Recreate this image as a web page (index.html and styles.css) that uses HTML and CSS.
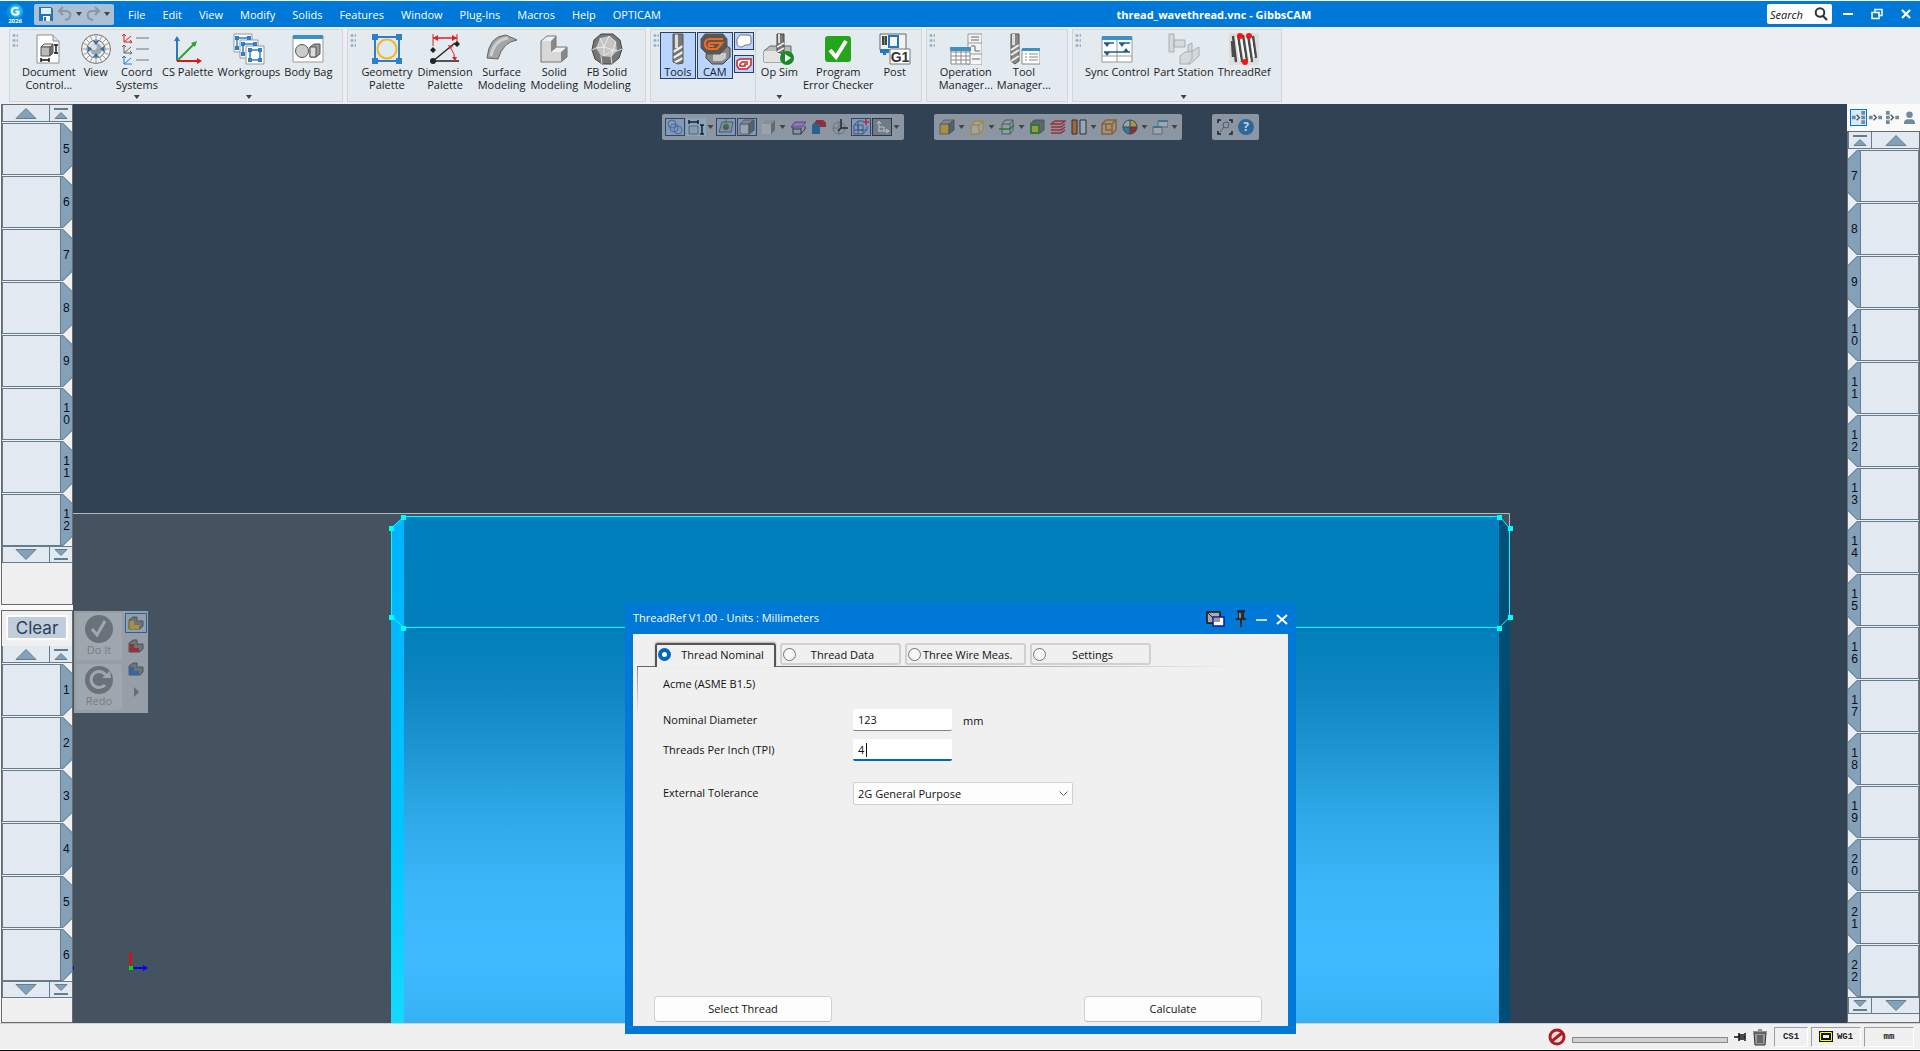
FILE: index.html
```
<!doctype html>
<html lang="en">
  <head>
    <meta charset="utf-8">
    <meta name="viewport" content="width=device-width, initial-scale=1">
    <title>thread_wavethread.vnc - GibbsCAM</title>
    <link rel="stylesheet" href="styles.css">
  </head>
  <body>
    <!-- Shared shapes -->
    <svg class="sprite" aria-hidden="true">
      <symbol id="cube" viewBox="0 0 16 16">
        <path d="M1 5h9v10H1z" fill="currentColor" stroke="#59636d"/>
        <path d="M1 5l4-4h10l-5 4z" fill="#7d868f" stroke="#59636d"/>
        <path d="M10 5l5-4v10l-5 4z" fill="#56606a" stroke="#4b555e"/>
      </symbol>
      <symbol id="up" viewBox="0 0 22 11"><path d="M1 10.500L11 .5l10 10z" fill="#83a1b8" stroke="#657c8c"/></symbol>
      <symbol id="down" viewBox="0 0 22 11"><path d="M1 .5l10 10L21 .5z" fill="#83a1b8" stroke="#657c8c"/></symbol>
      <symbol id="top" viewBox="0 0 14 11"><path d="M0 1h14" stroke="#657c8c" stroke-width="2"/><path d="M1 10.500l6-6 6 6z" fill="#83a1b8" stroke="#657c8c"/></symbol>
      <symbol id="bottom" viewBox="0 0 14 11"><path d="M0 10h14" stroke="#657c8c" stroke-width="2"/><path d="M1 .5l6 6 6-6z" fill="#83a1b8" stroke="#657c8c"/></symbol>
      <symbol id="ell" viewBox="0 0 16 14">
        <path d="M1 4l4-3h4v4l6 0v5l-3 3H1z" fill="#6b747d" stroke="#4a545e" stroke-linejoin="round"/>
        <path d="M1.500 5H6v4h5v4H1.500z" fill="currentColor"/>
      </symbol>
    </svg>

    <!-- Title bar -->
    <header class="titlebar">
      <svg class="logo" viewBox="0 0 18 22"><circle cx="9" cy="9" r="8.500" fill="#0b91dc"/><circle cx="10" cy="8" r="6.500" fill="#22b6ef"/><path d="M12.500 5.500C9 3.500 5.500 5.500 6 9c.5 3 4.500 3.500 6.500 1.500V8.500H9.500" fill="none" stroke="#fff" stroke-width="2"/><text x="9" y="20" class="logo-year">2026</text></svg>
      <div class="quick">
        <button aria-label="Save"><svg width="16" height="16" viewBox="0 0 16 16"><path d="M1 1h12l2 2v12H1z" fill="#2276b8"/><path d="M3 2h10v6H3z" fill="#e4eef6"/><path d="M5 10h7v5H5z" fill="#fff"/><path d="M6 11h2v4H6z" fill="#2276b8"/></svg></button>
        <button aria-label="Undo"><svg width="16" height="16" viewBox="0 0 16 16"><path d="M6 1L2 5l4 4M2 5h7c6 0 6 8-1 9" fill="none" stroke="#8798aa" stroke-width="2"/></svg></button>
        <span class="caret"></span>
        <button aria-label="Redo"><svg width="16" height="16" viewBox="0 0 16 16"><path d="M10 1l4 4-4 4M14 5H7C1 5 1 13 8 14" fill="none" stroke="#8798aa" stroke-width="2"/></svg></button>
        <span class="caret"></span>
      </div>
      <nav class="menu">
        <button>File</button><button>Edit</button><button>View</button><button>Modify</button><button>Solids</button><button>Features</button><button>Window</button><button>Plug-Ins</button><button>Macros</button><button>Help</button><button>OPTICAM</button>
      </nav>
      <h1>thread_wavethread.vnc - GibbsCAM</h1>
      <div class="window-tools">
        <label class="search"><input type="text" placeholder="Search" aria-label="Search"><svg width="14" height="14" viewBox="0 0 14 14"><circle cx="6" cy="5.500" r="4.300" fill="none" stroke="#333" stroke-width="2"/><path d="M9 9l4 4" stroke="#333" stroke-width="2.200"/></svg></label>
        <button aria-label="Minimize"><svg width="12" height="12" viewBox="0 0 12 12"><path d="M1 6h10" stroke="#fff" stroke-width="2"/></svg></button>
        <button aria-label="Restore"><svg width="12" height="12" viewBox="0 0 12 12"><path d="M1 4.500h7v6H1zM4 4V1.500h7v6H8" fill="none" stroke="#fff" stroke-width="1.500"/></svg></button>
        <button aria-label="Close"><svg width="12" height="12" viewBox="0 0 12 12"><path d="M2 2l8 8M10 2l-8 8" stroke="#fff" stroke-width="2.200"/></svg></button>
      </div>
    </header>

    <!-- Ribbon -->
    <section class="ribbon">
      <div class="group">
        <span class="grip"></span>
        <button class="cmd">
          <svg viewBox="0 0 32 32"><path d="M4 2h16l6 6v22H4z" fill="#fff" stroke="#8a8f94"/><path d="M20 2v6h6" fill="#ddd" stroke="#8a8f94"/><path d="M8 14l3-3h9l-3 3z" fill="#eee" stroke="#555"/><path d="M8 14h9v9H8z" fill="#bbb" stroke="#555"/><path d="M17 14l3-3v9l-3 3z" fill="#777" stroke="#555"/><path d="M8 25v4M8 27h8M16 25v4M21 12h4M23 12v8M21 20h4" stroke="#111" stroke-width="1.400"/></svg>
          <span>Document<br>Control...</span>
        </button>
        <button class="cmd">
          <svg viewBox="0 0 32 32"><circle cx="16" cy="16" r="14.500" fill="#f4f4f4" stroke="#777"/><path d="M16 1v30M1 16h30M5.500 5.500l21 21M26.500 5.500l-21 21M10 2.500l12 27M2.500 10l27 12M22 2.500l-12 27M29.500 10l-27 12" stroke="#888" stroke-width=".8"/><circle cx="16" cy="16" r="9" fill="#e8e8e8" stroke="#777"/><circle cx="16" cy="16" r="6" fill="#a8a8a8"/><circle cx="14" cy="14" r="3" fill="#ddd"/><path d="M16 12l-3-4h6zM16 20l-3 4h6zM12 16l-4-3v6zM20 16l4-3v6z" fill="#2276c4"/></svg>
          <span>View</span>
        </button>
        <button class="cmd">
          <svg viewBox="0 0 32 32"><g fill="none"><path d="M3 1v8h8M3 9l7-6M1 3l2-2 2 2M9 7l2 2-2 1" stroke="#d22"/><path d="M3 12v8h8M3 20l7-6M1 14l2-2 2 2M9 18l2 2-2 1" stroke="#666"/><path d="M3 23v8h8M3 31l7-6M1 25l2-2 2 2" stroke="#2878c8"/><path d="M15 5h13M15 16h13M15 27h13" stroke="#777"/></g></svg>
          <span>Coord<br>Systems</span><i class="caret"></i>
        </button>
        <button class="cmd">
          <svg viewBox="0 0 32 32"><path d="M5 28V5" stroke="#2878c8" stroke-width="2"/><path d="M2 8l3-5 3 5z" fill="#2878c8"/><path d="M5 28L22 11" stroke="#2aa52a" stroke-width="2"/><path d="M25 8l-6 2 4 4z" fill="#2aa52a"/><path d="M5 28h20" stroke="#e01515" stroke-width="2"/><path d="M25 25l5 3-5 3z" fill="#e01515"/></svg>
          <span>CS Palette</span>
        </button>
        <button class="cmd">
          <svg viewBox="0 0 32 32"><g fill="#fff" stroke="#999"><path d="M1 1h18v18H1z"/><path d="M7 7h18v18H7z"/><path d="M13 13h18v18H13z"/></g><g fill="none" stroke="#2f7fc8" stroke-width="1.500"><path d="M4 15V5h11M10 21V11h11M17 17h10v10H17z"/></g><path d="M2 3h4v4H2zM14 3h4v4h-4zM2 13h4v4H2zM8 9h4v4H8zM20 9h4v4h-4zM8 19h4v4H8zM15 15h4v4h-4zM25 15h4v4h-4zM15 25h4v4h-4zM25 25h4v4h-4z" fill="#2f7fc8"/></svg>
          <span>Workgroups</span><i class="caret"></i>
        </button>
        <button class="cmd">
          <svg viewBox="0 0 32 32"><path d="M1 3h30v26H1z" fill="#fff" stroke="#999"/><path d="M1 2h30v4H1z" fill="#3d92c4"/><circle cx="10" cy="18" r="6.500" fill="#ccc" stroke="#555"/><path d="M18 14l4-3h6v10l-4 3h-6z" fill="#999" stroke="#555"/><path d="M18 14h6v10h-6z" fill="#ddd" stroke="#555"/></svg>
          <span>Body Bag</span>
        </button>
      </div>

      <div class="group group-modeling">
        <span class="grip"></span>
        <button class="cmd">
          <svg viewBox="0 0 32 32"><path d="M4 4h24v24H4z" fill="#dfe9f2" stroke="#2f7fc8" stroke-width="2"/><circle cx="16" cy="16" r="9.500" fill="none" stroke="#f5b71c" stroke-width="2"/><path d="M1 1h6v6H1zM25 1h6v6h-6zM1 25h6v6H1zM25 25h6v6h-6z" fill="#2f7fc8"/></svg>
          <span>Geometry<br>Palette</span>
        </button>
        <button class="cmd">
          <svg viewBox="0 0 32 32"><path d="M4 1v12M28 1v8" stroke="#d22"/><path d="M4 5h24" stroke="#d22" stroke-width="1.500"/><path d="M4 5l5-3v6zM28 5l-5-3v6z" fill="#d22"/><path d="M4 28L26 10M4 28h26" stroke="#222" stroke-width="1.400"/><path d="M21 14q5 6 5 14" fill="none" stroke="#d22"/><path d="M19 12l5 1-3 3zM23 24h5l-2 4z" fill="#d22"/><path d="M4 14l3 3-3 3-3-3zM28 8l3 3-3 3-3-3z" fill="#222"/><circle cx="4" cy="28" r="3" fill="#222"/></svg>
          <span>Dimension<br>Palette</span>
        </button>
        <button class="cmd">
          <svg viewBox="0 0 32 32"><path d="M1 25Q3 3 20 2l11 5Q17 9 12 26z" fill="#a5a5a5" stroke="#666"/><path d="M5 23Q8 7 22 5" fill="none" stroke="#d0d0d0" stroke-width="3"/></svg>
          <span>Surface<br>Modeling</span>
        </button>
        <button class="cmd">
          <svg viewBox="0 0 32 32"><path d="M3 8h10v11h10v10H3z" fill="#d8d8d8"/><path d="M3 8l6-5h9l-5 5zM13 19l6-5h10l-6 5z" fill="#f0f0f0"/><path d="M13 8l5-5v12l-5 4zM23 19l6-5v10l-6 5z" fill="#888"/><path d="M3 8l6-5h9v11h11v10l-6 5H3z" fill="none" stroke="#777"/></svg>
          <span>Solid<br>Modeling</span>
        </button>
        <button class="cmd">
          <svg viewBox="0 0 32 32"><path d="M10 1h12l7 6 2 9-3 9-7 6H11l-7-5-3-9 2-10z" fill="#777" stroke="#444"/><path d="M9 5l9-2 7 6 1 9-6 6-10-1-5-8z" fill="#c4c4c4"/><path d="M9 5l4 9 5-11 7 6-3 8 4 1M13 14l9 3M5 15l8-1 0 9 9-6-2 7M1 17l4-2M10 23l1 8M20 24l1 7M26 18l5-2" fill="none" stroke="#f4f4f4" stroke-width=".8"/></svg>
          <span>FB Solid<br>Modeling</span>
        </button>
      </div>

      <div class="group group-cam">
        <span class="grip"></span>
        <button class="cmd pressed">
          <svg viewBox="0 0 32 32"><path d="M11 1h10v29l-5 1-5-2z" fill="#777"/><path d="M13 1h3v14h-3z" fill="#ddd"/><path d="M11 19l10-6M11 25l10-6M12 30l9-5" stroke="#eee" stroke-width="2.500"/><path d="M11 1h10v29l-5 1-5-2z" fill="none" stroke="#555"/></svg>
          <span>Tools</span>
        </button>
        <button class="cmd pressed">
          <svg viewBox="0 0 32 32"><path d="M8 11h17l6 4v9l-7 7H13l-6-6z" fill="#888" stroke="#444"/><path d="M14 20h13v5l-4 3h-9z" fill="#c9c9c9"/><path d="M6 1h18l4 5v8l-7 7H8l-6-6V6z" fill="#5d5552" stroke="#555"/><path d="M24 6H11q-5 0-5 5t6 5h6l5-6H12q-3 0-2 3h5" fill="none" stroke="#ec6b25" stroke-width="2.200"/></svg>
          <span>CAM</span>
        </button>
        <div class="mini-stack">
          <button aria-label="Geometry"><svg viewBox="0 0 16 16"><path d="M4 2h8q3 0 3 3v4q0 3-3 3H9l-3 2q-5 0-5-4V6z" fill="#fff" stroke="#777"/></svg></button>
          <button aria-label="Toolpath"><svg viewBox="0 0 16 16"><path d="M4 3h11v6l-4 4H3l-2-3V5z" fill="#fff" stroke="#c22" stroke-width="1.500"/><path d="M12 6H6L4 8v2h5V8h3" fill="none" stroke="#c22" stroke-width="1.500"/></svg></button>
        </div>
        <span class="rule"></span>
        <button class="cmd">
          <svg viewBox="0 0 32 32"><path d="M1 18l6-5h21v10l-5 6H1z" fill="#bbb" stroke="#666"/><path d="M1 18h17v11H1z" fill="#e3e3e3"/><path d="M14 1h7v20l-7-2z" fill="#777" stroke="#444"/><path d="M15 1h2v9h-2z" fill="#ddd"/><path d="M14 14l7-4M14 19l7-4" stroke="#eee" stroke-width="1.500"/><circle cx="24" cy="25" r="7" fill="#168a25"/><path d="M22 21l6 4-6 4z" fill="#fff"/></svg>
          <span>Op Sim</span><i class="caret"></i>
        </button>
        <button class="cmd">
          <svg viewBox="0 0 32 32"><rect x="3" y="3" width="26" height="26" rx="3" fill="#25a51c"/><path d="M8 17l6 7L24 8" fill="none" stroke="#fff" stroke-width="4"/></svg>
          <span>Program<br>Error Checker</span>
        </button>
        <button class="cmd">
          <svg viewBox="0 0 32 32"><path d="M1 1h26v16H1z" fill="#f2f2f2" stroke="#666"/><path d="M3 3h5v9H3z" fill="#444"/><path d="M5 3h1v9H5z" fill="#5a5"/><path d="M9 2h11v13H9z" fill="#2276c4"/><path d="M11 4h7v9h-7z" fill="#f5f5f5"/><path d="M1 16h9v4H7v2H4v-2H1z" fill="#2276c4"/><path d="M11 16h20v15H11z" fill="#fff" stroke="#777"/><text x="21" y="29" class="g-code">G1</text></svg>
          <span>Post</span>
        </button>
      </div>

      <div class="group group-managers">
        <span class="grip"></span>
        <button class="cmd">
          <svg viewBox="0 0 32 32"><path d="M18 1h14v31H18zM18 10h14M18 21h14" fill="#f4f4f4" stroke="#999"/><path d="M21 4h8M21 7h8M21 13h4v5h5M22 26h8" fill="none" stroke="#666"/><path d="M1 15h19v16H1z" fill="#fff" stroke="#888"/><path d="M1 19h19M1 23h19M1 27h19M6 17v14M11 17v14M16 17v14" stroke="#888"/><path d="M0 14h21v4H0z" fill="#3d92c4"/></svg>
          <span>Operation<br>Manager...</span>
        </button>
        <button class="cmd">
          <svg viewBox="0 0 32 32"><path d="M3 1h8v27l-4 3-4-3z" fill="#888" stroke="#555"/><path d="M4 1h3v11H4z" fill="#ddd"/><path d="M3 17l8-5M3 22l8-5M3 28l8-5" stroke="#eee" stroke-width="2"/><path d="M14 16h18v15H14z" fill="#fff" stroke="#888"/><path d="M14 15h18v3H14z" fill="#3d92c4"/><path d="M17 21h2M17 24h2M17 27h2M21 21h9M21 24h9M21 27h9" stroke="#888"/></svg>
          <span>Tool<br>Manager...</span>
        </button>
      </div>

      <div class="group">
        <span class="grip"></span>
        <button class="cmd">
          <svg viewBox="0 0 32 32"><path d="M1 4h30v25H1zM1 23h30M16 7v22" fill="#fff" stroke="#999"/><path d="M1 3h30v4H1z" fill="#3d92c4"/><path d="M3 10h10M18 10h11M3 19h26" stroke="#1f5c94" stroke-width="1.500"/><path d="M3 10h6l-3 4zM18 10h6l-3 4zM3 19h6l-3 4zM22 19h6l-3-4z" fill="#1f5c94"/></svg>
          <span>Sync Control</span>
        </button>
        <button class="cmd">
          <svg viewBox="0 0 32 32"><g fill="#d5d9dc" stroke="#a9aeb3"><path d="M1 1h5v18H1zM6 7h11v7H6z"/><path d="M12 23l5-4h3v-7l4-2v8l7-4v9l-9 8H12z"/><path d="M20 19l4-1v8l-4 5"/></g></svg>
          <span>Part Station</span><i class="caret"></i>
        </button>
        <button class="cmd">
          <svg viewBox="0 0 32 32"><path d="M1 0h30v32H1z" fill="#dedede"/><path d="M5 3l3 26M10 2l4 27M15 2l4 27M20 2l4 27M25 3l3 22M4 8l1 16" stroke="#4a4a4a" stroke-width="2.400"/><path d="M8 4l4 24M13 4l4 24M18 4l4 24M23 4l3 20" stroke="#fff" stroke-width="1.500"/><circle cx="12" cy="3" r="3" fill="#f11"/><circle cx="21" cy="3" r="3" fill="#f11"/><circle cx="17" cy="29" r="3" fill="#f11"/></svg>
          <span>ThreadRef</span>
        </button>
      </div>
    </section>

    <main class="workspace">
      <!-- Tool tiles and operation tiles -->
      <aside class="side side-left">
        <div class="palette grow">
          <div class="nav"><button aria-label="Up"><svg class="wide"><use href="#up"/></svg></button><button class="small" aria-label="First"><svg class="narrow"><use href="#top"/></svg></button></div>
          <button class="tile"><span>5</span></button>
          <button class="tile"><span>6</span></button>
          <button class="tile"><span>7</span></button>
          <button class="tile"><span>8</span></button>
          <button class="tile"><span>9</span></button>
          <button class="tile"><span>10</span></button>
          <button class="tile"><span>11</span></button>
          <button class="tile"><span>12</span></button>
          <div class="nav nav-end"><button aria-label="Down"><svg class="wide"><use href="#down"/></svg></button><button class="small" aria-label="Last"><svg class="narrow"><use href="#bottom"/></svg></button></div>
        </div>
        <div class="palette lower">
          <button class="clear">Clear</button>
          <div class="nav"><button aria-label="Up"><svg class="wide"><use href="#up"/></svg></button><button class="small" aria-label="First"><svg class="narrow"><use href="#top"/></svg></button></div>
          <button class="tile"><span>1</span></button>
          <button class="tile"><span>2</span></button>
          <button class="tile"><span>3</span></button>
          <button class="tile"><span>4</span></button>
          <button class="tile"><span>5</span></button>
          <button class="tile"><span>6</span></button>
          <div class="nav nav-end"><button aria-label="Down"><svg class="wide"><use href="#down"/></svg></button><button class="small" aria-label="Last"><svg class="narrow"><use href="#bottom"/></svg></button></div>
        </div>
      </aside>

      <section class="viewport">
        <svg class="scene" viewBox="0 0 1774 919" preserveAspectRatio="xMidYMin slice">
          <defs>
            <linearGradient id="face" x1="0" y1="0" x2="0" y2="1"><stop offset="0" stop-color="#0080bf"/><stop offset=".22" stop-color="#007fbc"/><stop offset=".33" stop-color="#0d85c2"/><stop offset=".45" stop-color="#1c94d1"/><stop offset=".59" stop-color="#2fa8e7"/><stop offset=".73" stop-color="#3bb6f8"/><stop offset=".88" stop-color="#3fbaff"/><stop offset="1" stop-color="#36b2f4"/></linearGradient>
            <linearGradient id="lit" x1="0" y1="0" x2="0" y2="1"><stop offset="0" stop-color="#00b4ff"/><stop offset=".6" stop-color="#00c4ff"/><stop offset="1" stop-color="#14daff"/></linearGradient>
            <linearGradient id="shade" x1="0" y1="0" x2="0" y2="1"><stop offset="0" stop-color="#00527a"/><stop offset=".6" stop-color="#00466a"/><stop offset="1" stop-color="#004d77"/></linearGradient>
          </defs>
          <path d="M0 409h1437v510H0z" fill="#45525f"/>
          <path d="M0 409.500h1436.500v14" fill="none" stroke="#b4b9be"/>
          <path d="M318 424l13-12v507h-13z" fill="url(#lit)"/>
          <path d="M331 412h1095v507H331z" fill="url(#face)"/>
          <path d="M1426 412l11 12v495h-11z" fill="url(#shade)"/>
          <path d="M331.500 412.500h1095l10 11.500v89l-10 10.500h-1095l-13-10.500v-89z" fill="none" stroke="#00ffff"/>
          <path d="M328 411h5v5h-5zM316 422h5v5h-5zM316 511h5v5h-5zM328 522h5v5h-5zM1424 411h5v5h-5zM1435 422h5v5h-5zM1435 511h5v5h-5zM1424 522h5v5h-5z" fill="#00ffff"/>
          <path d="M57.500 864v-13" stroke="#f00" stroke-width="2"/><path d="M55.500 852l2-4 2 4z" fill="#f00"/>
          <path d="M59 864h11" stroke="#00f" stroke-width="2"/><path d="M70 861l5 3-5 3z" fill="#00f"/>
          <path d="M56 862h4v4h-4z" fill="#0d0"/><path d="M0 862h1v4H0z" fill="#00f"/>
        </svg>

        <!-- View toolbars -->
        <div class="toolbars">
          <div class="toolbar">
            <button class="on" aria-label="Geometry"><svg viewBox="0 0 16 16"><g fill="none" stroke="#4b6a91"><circle cx="5" cy="5" r="4"/><circle cx="7" cy="9" r="4"/><circle cx="11" cy="11" r="4"/></g></svg></button>
            <button class="soft" aria-label="Dimensions"><svg viewBox="0 0 16 16"><path d="M1 1v4M1 3h9M10 1v4M12 6h4M14 6v9M12 15h4" stroke="#15202a" stroke-width="1.500"/><path d="M1 7h9v8H1z" fill="#8c9bac" stroke="#506880"/></svg></button>
            <span class="caret"></span>
            <button class="on" aria-label="Origin"><svg viewBox="0 0 16 16"><path d="M4 3h11l-2 10H1z" fill="#86909a" stroke="#4f5963"/><circle cx="8" cy="8" r="3" fill="#4f5963"/><path d="M8 0v9M6 7h5" stroke="#2b8a38"/></svg></button>
            <button class="on" aria-label="Solid"><svg class="c-grey"><use href="#cube"/></svg></button>
            <button aria-label="Wireframe"><svg viewBox="0 0 16 16"><path d="M2 5h9v10H2z" fill="#99a3ac"/><path d="M2 5l4-4h9l-4 4z" fill="#858e97"/><path d="M11 5l4-4v10l-4 4z" fill="#606a74"/></svg></button>
            <span class="caret"></span>
            <button aria-label="Plane"><svg viewBox="0 0 16 16"><path d="M3 8v7h8l4-5V7M11 9v6M3 10h8" fill="none" stroke="#303a45"/><path d="M5 3h11l-4 5H1z" fill="#8b76b3" stroke="#5a3d92"/></svg></button>
            <button aria-label="Intersect"><svg viewBox="0 0 16 16"><path d="M1 6l4-4h4v13H1z" fill="#2f5f8b"/><path d="M5 1h7q4 2 3 7H9V5H4z" fill="#8f2f3b"/></svg></button>
            <button aria-label="Coordinate sphere"><svg viewBox="0 0 16 16"><circle cx="7" cy="9" r="6" fill="none" stroke="#67727c"/><path d="M7 3v12M1 9h5" stroke="#67727c"/><path d="M9 0v9h7M6 12l3-3" fill="none" stroke="#202a33" stroke-width="1.500"/></svg></button>
            <button class="on" aria-label="Grid box"><svg viewBox="0 0 16 16"><path d="M1 6h9v9H1zM1 6l4-4h5M10 15l4-4V7M5 2v9h9M1 11h9M5 6v9" fill="none" stroke="#415b7a"/><path d="M13 0v6M10 3h6" stroke="#b02b3b" stroke-width="1.500"/></svg></button>
            <button class="boxed" aria-label="Axes"><svg viewBox="0 0 16 16"><path d="M5 13V3M5 12h9M3 5l2-3 2 3M12 10l3 2-3 2M5 8h5v4" fill="none" stroke="#bcc6d0"/></svg></button>
            <span class="caret"></span>
          </div>
          <div class="toolbar">
            <button aria-label="Shaded"><svg class="c-gold"><use href="#cube"/></svg></button><span class="caret"></span>
            <button aria-label="Edges"><svg viewBox="0 0 16 16"><path d="M2 6h8v9H2zM2 6l4-4h8v9l-4 4M10 6l4-4" fill="#9aa4ad" stroke="#a58842" stroke-width="1.500"/></svg></button><span class="caret"></span>
            <button aria-label="Section"><svg viewBox="0 0 16 16"><path d="M3 5h8v10H3zM3 5l3-4h8v10l-3 4M11 5l3-4" fill="#919ca6" stroke="#4d5862"/><path d="M0 10h11l4-4" fill="none" stroke="#2b7a31" stroke-width="1.500"/></svg></button><span class="caret"></span>
            <button aria-label="Face"><svg viewBox="0 0 16 16"><path d="M1 5l4-4h10v10l-5 4z" fill="#5c6670" stroke="#4b555e"/><path d="M2 6h8v8H2z" fill="#a39448" stroke="#2f7a35" stroke-width="2"/></svg></button>
            <button aria-label="Layers"><svg viewBox="0 0 16 16"><path d="M1 5l4-3h10l-4 3zM1 8h10l4-3M1 11h10l4-3M1 14h10l4-3" fill="none" stroke="#9b2f3c" stroke-width="1.500"/></svg></button>
            <button aria-label="Panels"><svg viewBox="0 0 16 16"><path d="M1 1h5v14H1z" fill="#a76732" stroke="#293541"/><path d="M9 1h6v14H9z" fill="#99a5b3" stroke="#293541"/></svg></button><span class="caret"></span>
            <button aria-label="Stock"><svg viewBox="0 0 16 16"><path d="M1 5h10v10H1zM1 5l4-4h10v10l-4 4M11 5l4-4M5 5v6h6" fill="#a39477" stroke="#86603e" stroke-width="1.500"/></svg></button>
            <button aria-label="Analysis"><svg viewBox="0 0 16 16"><circle cx="8" cy="8" r="7" fill="#9aa4ad"/><path d="M8 1a7 7 0 0 1 7 7H8z" fill="#aa9541"/><path d="M15 8a7 7 0 0 1-7 7V8z" fill="#8f2f3b"/><path d="M1 8a7 7 0 0 0 7 7V8z" fill="#3c779e"/><path d="M8 1v14M1 8h14" stroke="#394650"/><circle cx="8" cy="8" r="7" fill="none" stroke="#394650"/></svg></button><span class="caret"></span>
            <button aria-label="Windows"><svg viewBox="0 0 16 16"><path d="M6 2h10v6H6zM1 8h9v7H1z" fill="#9ba6b1" stroke="#5b6874"/><path d="M6 1h10v2H6zM1 7h9v2H1z" fill="#3e7394"/></svg></button><span class="caret"></span>
          </div>
          <div class="toolbar">
            <button aria-label="Zoom to fit"><svg viewBox="0 0 16 16"><path d="M1 4V1h3M12 1h3v3M15 12v3h-3M4 15H1v-3" fill="none" stroke="#1a232c" stroke-width="1.500"/><circle cx="9" cy="6" r="3" fill="none" stroke="#4c5863"/><path d="M7 8l-4 5" stroke="#4c5863"/></svg></button>
            <button aria-label="Help"><svg viewBox="0 0 16 16"><circle cx="8" cy="8" r="8" fill="#2c689c"/><text x="8" y="12" class="help-mark">?</text></svg></button>
          </div>
        </div>

        <!-- Machining actions -->
        <div class="actions">
          <div class="action-main">
            <button disabled><svg viewBox="0 0 28 28"><circle cx="14" cy="14" r="14" fill="#69727a"/><path d="M7 14l5 6L20 6" fill="none" stroke="#a0a8af" stroke-width="3"/></svg>Do It</button>
            <button disabled><svg viewBox="0 0 28 28"><circle cx="14" cy="14" r="14" fill="#69727a"/><path d="M20 19a8 8 0 1 1 2-7" fill="none" stroke="#a0a8af" stroke-width="3"/><path d="M17 12h9l-1-7z" fill="#a0a8af"/></svg>Redo</button>
          </div>
          <div class="action-side">
            <button class="picked" aria-label="Part"><svg class="c-gold"><use href="#ell"/></svg></button>
            <button aria-label="Fixture"><svg class="c-red"><use href="#ell"/></svg></button>
            <button aria-label="Stock"><svg class="c-blue"><use href="#ell"/></svg></button>
            <button aria-label="More"><svg viewBox="0 0 16 14"><path d="M6 2l5 5-5 5z" fill="#646d75"/></svg></button>
          </div>
        </div>
      </section>

      <aside class="side side-right">
        <div class="flow-tools">
          <button class="picked" aria-label="Insert right"><svg viewBox="0 0 14 14"><path d="M0 5h4v4H0zM10 0h4v4h-4zM10 5h4v4h-4zM10 10h4v4h-4z" fill="#6e8ba3"/><path d="M5 4l3 3-3 3" fill="none" stroke="#555" stroke-width="1.500"/></svg></button>
          <button aria-label="Insert"><svg viewBox="0 0 14 14"><path d="M0 5h4v4H0zM10 5h4v4h-4z" fill="#6e8ba3"/><path d="M5 4l3 3-3 3" fill="none" stroke="#555" stroke-width="1.500"/></svg></button>
          <button aria-label="Insert left"><svg viewBox="0 0 14 14"><path d="M0 0h4v4H0zM0 5h4v4H0zM0 10h4v4H0zM10 5h4v4h-4z" fill="#6e8ba3"/><path d="M5 4l3 3-3 3" fill="none" stroke="#555" stroke-width="1.500"/></svg></button>
          <button aria-label="User"><svg viewBox="0 0 14 14"><circle cx="7" cy="4" r="3.500" fill="#6e8ba3"/><path d="M1 14q0-5 4-5h4q4 0 4 5z" fill="#6e8ba3"/></svg></button>
        </div>
        <div class="palette grow">
          <div class="nav"><button class="small" aria-label="First"><svg class="narrow"><use href="#top"/></svg></button><button aria-label="Up"><svg class="wide"><use href="#up"/></svg></button></div>
          <button class="tile"><span>7</span></button>
          <button class="tile"><span>8</span></button>
          <button class="tile"><span>9</span></button>
          <button class="tile"><span>10</span></button>
          <button class="tile"><span>11</span></button>
          <button class="tile"><span>12</span></button>
          <button class="tile"><span>13</span></button>
          <button class="tile"><span>14</span></button>
          <button class="tile"><span>15</span></button>
          <button class="tile"><span>16</span></button>
          <button class="tile"><span>17</span></button>
          <button class="tile"><span>18</span></button>
          <button class="tile"><span>19</span></button>
          <button class="tile"><span>20</span></button>
          <button class="tile"><span>21</span></button>
          <button class="tile"><span>22</span></button>
          <div class="nav nav-end"><button class="small" aria-label="Last"><svg class="narrow"><use href="#bottom"/></svg></button><button aria-label="Down"><svg class="wide"><use href="#down"/></svg></button></div>
        </div>
      </aside>
    </main>

    <!-- Status bar -->
    <footer class="statusbar">
      <svg width="18" height="18" viewBox="0 0 18 18"><circle cx="9" cy="9" r="7" fill="#f7dede" stroke="#a91f24" stroke-width="3"/><path d="M4 13L14 5" stroke="#a91f24" stroke-width="3"/></svg>
      <span class="progress"></span>
      <svg width="12" height="10" viewBox="0 0 12 10"><path d="M0 5h5M5 1v8M5 3h5M5 7h5M11 1v8M5 5h6" stroke="#111" stroke-width="1.500"/></svg>
      <svg width="16" height="18" viewBox="0 0 16 18"><path d="M2 5h12l-1 12H3z" fill="#999" stroke="#333"/><path d="M1 4h14M6 2h4M6 7v8M8 7v8M10 7v8" stroke="#333"/></svg>
      <button class="cell cell-cs">CS1</button>
      <button class="cell"><svg width="14" height="11" viewBox="0 0 14 11"><path d="M0 0h14v11H0z" fill="#111"/><path d="M1.500 1.500h11v8h-11z" fill="#111" stroke="#ff0"/><path d="M4 4h6v3H4z" fill="#eee"/></svg>WG1</button>
      <button class="cell">mm</button>
    </footer>

    <!-- ThreadRef window -->
    <form class="dialog" role="dialog" aria-labelledby="dialog-title">
      <div class="dialog-bar">
        <h2 id="dialog-title">ThreadRef V1.00 - Units : Millimeters</h2>
        <button type="button" aria-label="Dock"><svg width="20" height="16" viewBox="0 0 20 16"><path d="M1 1h13v11H1z" fill="#aaa" stroke="#111" stroke-width="1.500"/><path d="M1 1l6 6" fill="none" stroke="#222"/><path d="M7 6h11v9H7z" fill="#fff" stroke="#0a12a8" stroke-width="1.500"/><path d="M8 7h6v4H8z" fill="#999"/></svg></button>
        <button type="button" aria-label="Pin"><svg width="14" height="17" viewBox="0 0 14 17"><path d="M3 0h8v2l-1 1v4l3 3H1l3-3V3L3 2zM6 10h2v7H6z" fill="#2b2b2b"/><path d="M5 3h2v5H5z" fill="#888"/></svg></button>
        <button type="button" aria-label="Minimize"><svg width="12" height="12" viewBox="0 0 12 12"><path d="M0 7h11" stroke="#fff" stroke-width="1.500"/></svg></button>
        <button type="button" aria-label="Close"><svg width="12" height="12" viewBox="0 0 12 12"><path d="M1 2l10 9M11 2L1 11" stroke="#fff" stroke-width="2"/></svg></button>
      </div>
      <div class="dialog-body">
        <div class="tabs">
          <label class="tab active"><input type="radio" name="page" checked><span>Thread Nominal</span></label>
          <label class="tab"><input type="radio" name="page"><span>Thread Data</span></label>
          <label class="tab tight"><input type="radio" name="page"><span>Three Wire Meas.</span></label>
          <label class="tab"><input type="radio" name="page"><span>Settings</span></label>
        </div>
        <div class="page">
          <p>Acme (ASME B1.5)</p>
          <div class="field"><label for="diameter">Nominal Diameter</label><input id="diameter" type="text" value="123"><span>mm</span></div>
          <div class="field"><label for="tpi">Threads Per Inch (TPI)</label><input id="tpi" class="focused" type="text" value="4"></div>
          <div class="field field-tolerance"><label for="tolerance">External Tolerance</label><select id="tolerance"><option>2G General Purpose</option></select></div>
        </div>
        <div class="dialog-buttons">
          <button type="button">Select Thread</button>
          <button type="button">Calculate</button>
        </div>
      </div>
    </form>
  </body>
</html>
```

FILE: styles.css
```
/* Reset */
* {
  margin: 0;
  padding: 0;
  box-sizing: border-box;
}

body {
  display: flex;
  flex-direction: column;
  height: 100vh;
  overflow: hidden;
  border-top: 1px solid #fff;
  border-bottom: 1px solid #111;
  background-color: #fff;
  color: #1c1c1c;
  font-family: "Open Sans", "Noto Sans", sans-serif;
  font-size: 11px;
}

button,
input,
select {
  border: none;
  background: none;
  color: inherit;
  font: inherit;
}

svg {
  display: block;
  flex: none;
}

.sprite {
  position: absolute;
  width: 0;
  height: 0;
}

.caret {
  flex: none;
  width: 6px;
  height: 4px;
  background-color: #444;
  clip-path: polygon(0 0, 100% 0, 50% 100%);
}

/* Title bar */
.titlebar {
  display: flex;
  align-items: center;
  height: 26px;
  padding: 0 8px 0 6px;
  background-color: #0078d7;
  color: #fff;
}

.logo {
  width: 18px;
  height: 22px;
}

.logo-year {
  fill: #fff;
  font-size: 6px;
  font-weight: bold;
  text-anchor: middle;
}

.quick {
  display: flex;
  align-items: center;
  gap: 3px;
  height: 21px;
  margin-left: 10px;
  padding: 0 4px;
  border-radius: 2px;
  background-color: #adbfd2;
}

.menu {
  display: flex;
  gap: 17px;
  margin-left: 14px;
}

.titlebar h1 {
  flex: 1;
  font-size: 11px;
  font-weight: bold;
  text-align: center;
}

.window-tools {
  display: flex;
  align-items: center;
  gap: 17px;
}

.search {
  display: flex;
  align-items: center;
  width: 65px;
  height: 20px;
  margin-right: -7px;
  padding: 0 4px 0 3px;
  border-radius: 2px;
  background-color: #fff;
}

.search input {
  flex: 1;
  min-width: 0;
}

.search input::placeholder {
  color: #111;
  font-style: italic;
}

/* Ribbon */
.ribbon {
  display: flex;
  gap: 4px;
  height: 77px;
  padding: 2px 9px;
  background-color: #ebeff3;
}

.group {
  display: flex;
  gap: 4px;
  padding: 3px 10px 0 2px;
  border: 1px solid #d2d6da;
  background-color: #e3eaf0;
}

.group-modeling {
  gap: 5px;
  padding-right: 14px;
}

.group-managers {
  padding-right: 16px;
}

.grip {
  width: 6px;
  height: 15px;
  background-image: radial-gradient(circle, #9db2c6 1px, transparent 2px);
  background-size: 4px 5px;
}

.cmd {
  display: flex;
  flex-direction: column;
  align-items: center;
  min-width: 32px;
  line-height: 13px;
}

.cmd svg {
  width: 32px;
  height: 32px;
}

.cmd .caret {
  margin-top: auto;
  margin-bottom: 2px;
}

.group-cam {
  gap: 5px;
}

.pressed {
  width: 36px;
  height: 47px;
  margin-top: -1px;
  border: 1px solid #2d3f66;
  background-color: #b9d4fd;
}

.pressed,
.mini-stack,
.rule {
  margin-left: -4px;
}

.mini-stack {
  display: flex;
  flex-direction: column;
  gap: 5px;
  margin-top: -1px;
}

.mini-stack button {
  width: 20px;
  height: 18px;
  padding: 0 1px;
  border: 1px solid #2d3f66;
  background-color: #b9d4fd;
}

.mini-stack svg {
  width: 16px;
  height: 16px;
}

.rule {
  width: 1px;
  margin-top: -3px;
  background-color: #cfd4d9;
}

.g-code {
  fill: #333;
  font-family: "Liberation Sans", sans-serif;
  font-size: 14px;
  font-weight: bold;
  text-anchor: middle;
}

/* Side palettes */
.workspace {
  display: flex;
  flex: 1;
  min-height: 0;
}

.side {
  display: flex;
  flex-direction: column;
  width: 73px;
  padding-left: 1px;
  background-color: #fafafa;
}

.palette {
  display: flex;
  flex-direction: column;
  border: 1px solid #6a6a6a;
  background-color: #f0f0f0;
}

.grow {
  flex: 1;
}

.lower {
  margin-top: 5px;
  padding-bottom: 24px;
}

.nav {
  display: flex;
  gap: 1px;
  height: 17px;
  border: 1px solid #657c8c;
  border-width: 0 0 1px 1px;
  background-color: #657c8c;
}

.nav-end {
  border-top-width: 1px;
}

.nav button {
  display: flex;
  flex: 1;
  justify-content: center;
  align-items: center;
  background-color: #e2e9f0;
}

.nav .small {
  flex: none;
  width: 22px;
}

.wide {
  width: 22px;
  height: 11px;
}

.narrow {
  width: 14px;
  height: 11px;
}

.tile {
  display: flex;
  justify-content: flex-end;
  flex: none;
  height: 52px;
  margin-top: 1px;
  border: 1px solid #657c8c;
  border-right: none;
  background-color: #e2e9f0;
  clip-path: polygon(0 0, calc(100% - 9px) 0, 100% 9px, 100% calc(100% - 9px), calc(100% - 9px) 100%, 0 100%);
}

.tile span {
  display: flex;
  align-items: center;
  width: 12px;
  height: 50px;
  padding: 0 2px;
  border-left: 1px solid #657c8c;
  background-color: #83a1b8;
  background-image:
    linear-gradient(225deg, #657c8c 6px, transparent 7px),
    linear-gradient(315deg, #657c8c 6px, transparent 7px);
  background-size: 100% 50%;
  background-position: top, bottom;
  background-repeat: no-repeat;
  color: #0b0b1c;
  font-family: "Liberation Sans", sans-serif;
  font-size: 12px;
  line-height: 12px;
  word-break: break-all;
}

.side-right .tile {
  justify-content: flex-start;
  border-left: none;
  border-right: 1px solid #657c8c;
  clip-path: polygon(9px 0, 100% 0, 100% 100%, 9px 100%, 0 calc(100% - 9px), 0 9px);
}

.side-right .tile span {
  width: 13px;
  padding: 0 2px 0 3px;
  border-left: none;
  border-right: 1px solid #657c8c;
  background-image:
    linear-gradient(135deg, #657c8c 6px, transparent 7px),
    linear-gradient(45deg, #657c8c 6px, transparent 7px);
}

.side-right {
  padding-left: 0;
}

.side-right .palette {
  background-color: #e8eef3;
}

.clear {
  height: 25px;
  margin: 4px 4px 6px;
  border: 2px solid #fcfcfc;
  border-radius: 3px;
  background-color: #bfcddc;
  color: #2c4058;
  font-family: Inter, "Liberation Sans", sans-serif;
  font-size: 17px;
  line-height: 20px;
}

.flow-tools {
  display: flex;
  align-items: center;
  height: 27px;
  padding-left: 3px;
}

.flow-tools button {
  display: flex;
  justify-content: center;
  align-items: center;
  width: 17px;
  height: 17px;
}

.flow-tools svg {
  width: 13px;
  height: 13px;
}

.flow-tools .picked {
  border: 1px solid #0078d7;
  background-color: #d9ebfa;
}

/* Viewport */
.viewport {
  flex: 1;
  position: relative;
  overflow: hidden;
  background-color: #304254;
}

.scene {
  position: absolute;
  inset: 0;
  width: 100%;
  height: 100%;
}

.toolbars {
  position: absolute;
  top: 10px;
  left: 0;
  right: 0;
  display: flex;
  justify-content: center;
  gap: 30px;
}

.toolbar {
  display: flex;
  align-items: center;
  gap: 1px;
  height: 26px;
  padding: 0 3px;
  border-radius: 2px;
  background-color: #8b96a2;
}

.toolbar button {
  display: flex;
  justify-content: center;
  align-items: center;
  width: 20px;
  height: 18px;
}

.toolbar svg {
  width: 16px;
  height: 16px;
}

.toolbar .on {
  border: 1px solid #34455f;
  background-color: #7f98bb;
}

.toolbar .soft {
  background-color: #8ba5bf;
}

.toolbar .boxed {
  border: 1px solid #2b3743;
  background-color: #6f7b87;
}

.toolbar .caret {
  margin: 0 1px;
}

.help-mark {
  fill: #c5d2dc;
  font-size: 12px;
  font-weight: bold;
  text-anchor: middle;
}

.c-grey { color: #99a3ad; }
.c-gold { color: #a8903c; }
.c-red { color: #96313a; }
.c-blue { color: #34689a; }

.actions {
  position: absolute;
  top: 507px;
  left: 1px;
  display: flex;
  gap: 3px;
  width: 74px;
  height: 102px;
  padding: 2px 1px 3px 2px;
  background-color: #969fa7;
}

.action-main {
  display: flex;
  flex: 1;
  flex-direction: column;
  gap: 4px;
}

.action-main button {
  display: flex;
  flex: 1;
  flex-direction: column;
  align-items: center;
  justify-content: center;
  border-radius: 3px;
  background-color: #9fa7ae;
  color: #747d85;
  line-height: 14px;
}

.action-main svg {
  width: 28px;
  height: 28px;
}

.action-side {
  display: flex;
  flex-direction: column;
  gap: 3px;
}

.action-side button {
  display: flex;
  justify-content: center;
  align-items: center;
  width: 22px;
  height: 20px;
}

.action-side svg {
  width: 16px;
  height: 14px;
}

.action-side .picked {
  border: 1px solid #1d66a6;
}

/* Status bar */
.statusbar {
  display: flex;
  justify-content: flex-end;
  align-items: center;
  gap: 6px;
  height: 27px;
  padding-right: 9px;
  border-top: 1px solid #cfd0d6;
  border-bottom: 1px solid #fff;
  background-color: #f0f0f0;
}

.progress {
  width: 156px;
  height: 6px;
  margin-top: 7px;
  border: 1px solid #888;
  background-color: #d2d2d2;
}

.cell {
  display: flex;
  justify-content: center;
  align-items: center;
  gap: 4px;
  width: 50px;
  height: 20px;
  margin-right: -3px;
  border: 1px solid #9d9d9d;
  border-color: #9d9d9d #fff #fff #9d9d9d;
  font-family: "Liberation Mono", monospace;
  font-size: 9px;
  font-weight: bold;
}

.cell-cs {
  width: 34px;
}

/* ThreadRef window */
.dialog {
  position: absolute;
  left: 50%;
  bottom: 17px;
  display: flex;
  flex-direction: column;
  width: 671px;
  height: 431px;
  margin-left: -335px;
  padding: 0 8px 8px;
  background-color: #0078d7;
  color: #111;
}

.dialog-bar {
  display: flex;
  align-items: center;
  gap: 8px;
  height: 31px;
  color: #fff;
}

.dialog-bar h2 {
  flex: 1;
  padding-bottom: 2px;
  font-size: 11px;
  font-weight: normal;
}

.dialog-body {
  display: flex;
  flex: 1;
  flex-direction: column;
  padding: 9px 26px 4px 4px;
  background-color: #f0f0f0;
}

.tabs {
  display: flex;
  gap: 4px;
  height: 23px;
  padding-left: 18px;
}

.tab {
  display: flex;
  align-items: center;
  width: 121px;
  height: 22px;
  padding-left: 1px;
  border: 2px solid #d0d0d0;
  border-radius: 3px;
}

.tab span {
  flex: 1;
  padding-right: 10px;
  text-align: center;
}

.tab.tight span {
  padding: 0 0 0 2px;
  text-align: left;
}

.tab input {
  appearance: none;
  width: 13px;
  height: 13px;
  border: 1px solid #707070;
  border-radius: 50%;
  background-color: #f8f8f8;
}

.tab input:checked {
  border: 4px solid #0067c0;
  background-color: #fff;
}

.tab.active {
  height: 24px;
  padding-bottom: 3px;
  border: 2px solid #555;
  border-bottom: none;
  border-radius: 3px 3px 0 0;
  background-color: #f0f0f0;
  box-shadow: 0 -1px 2px #aaa;
}

.tab.active span {
  padding-right: 0;
}

.page {
  flex: 1;
  padding: 10px 0 0 26px;
  background-image:
    linear-gradient(#666, #666),
    linear-gradient(90deg, #666, #f0f0f0 95%),
    linear-gradient(#888, #f0f0f0);
  background-size: 18px 1px, calc(100% - 139px) 1px, 1px 50px;
  background-position: 0 0, 139px 0, 0 0;
  background-repeat: no-repeat;
}

.page p {
  line-height: 16px;
}

.field {
  display: flex;
  align-items: center;
  margin-top: 8px;
}

.page p + .field {
  margin-top: 17px;
}

.field label {
  width: 190px;
  padding-bottom: 2px;
}

.field input {
  width: 99px;
  height: 22px;
  padding: 0 5px;
  border-bottom: 1px solid #868686;
  border-radius: 2px;
  background-color: #fff;
}

/* Text cursor after the value */
.field .focused {
  border-bottom: 2px solid #0067c0;
  background-image: linear-gradient(#111, #111);
  background-size: 1px 14px;
  background-position: 13px 4px;
  background-repeat: no-repeat;
}

.field span {
  margin-left: 11px;
}

.field-tolerance {
  margin-top: 21px;
}

.field select {
  appearance: none;
  width: 220px;
  height: 23px;
  padding: 0 4px;
  border: 1px solid #d0d0d0;
  border-radius: 2px;
  background: #fdfdfd url("data:image/svg+xml,%3Csvg xmlns='http://www.w3.org/2000/svg' width='9' height='6'%3E%3Cpath d='M.5 .5l4 4 4-4' fill='none' stroke='%23666'/%3E%3C/svg%3E") no-repeat right 4px center;
}

.dialog-buttons {
  display: flex;
  justify-content: space-between;
  padding-left: 17px;
}

.dialog-buttons button {
  width: 178px;
  height: 26px;
  padding-bottom: 2px;
  border: 1px solid #d0d0d0;
  border-bottom-color: #b9b9b9;
  border-radius: 4px;
  background-color: #fdfdfd;
}
```
